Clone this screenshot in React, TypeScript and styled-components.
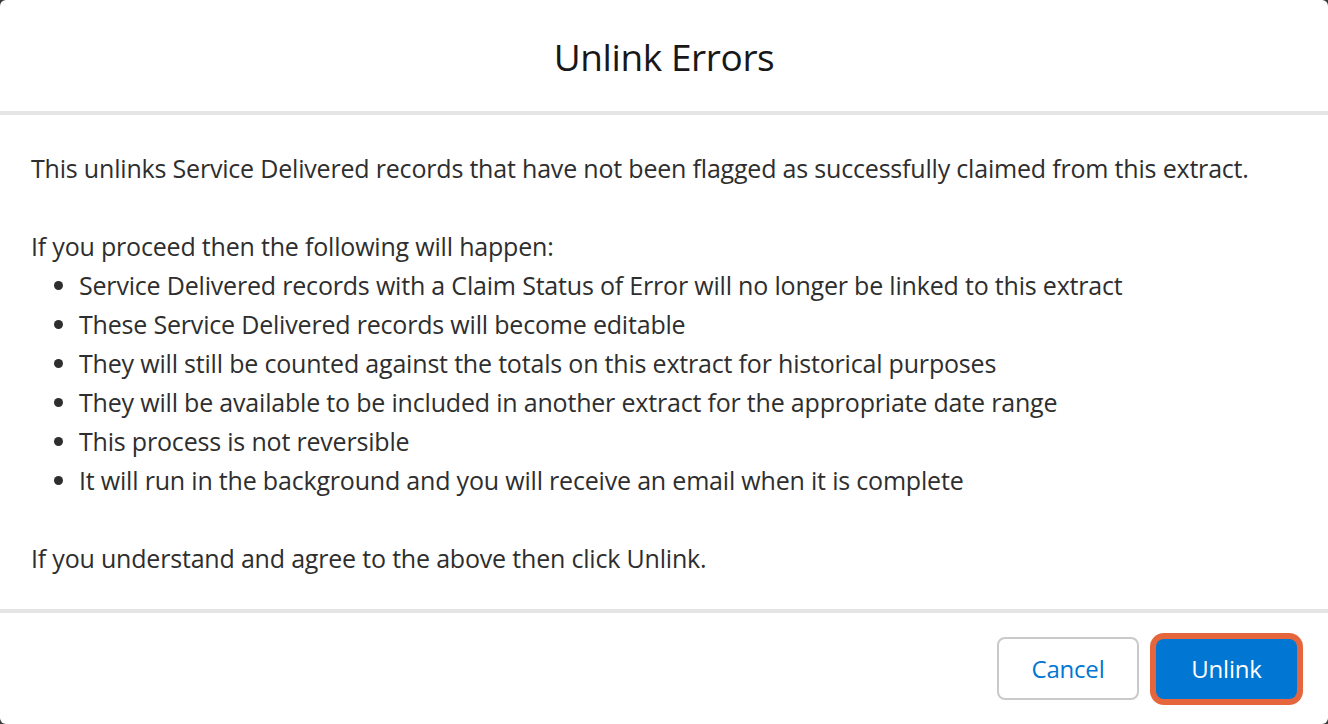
import React from "react";
import styled, { createGlobalStyle } from "styled-components";

const Global = createGlobalStyle`
  html, body { margin: 0; padding: 0; background: #3a3a3a; }
  body { font-family: "Open Sans", "Noto Sans", sans-serif; }
  * { box-sizing: border-box; }
`;

const Modal = styled.div`
  width: 1328px;
  height: 724px;
  background: #ffffff;
  border-radius: 6px;
  overflow: hidden;
  display: flex;
  flex-direction: column;
`;

const Header = styled.header`
  height: 115px;
  flex: none;
  display: flex;
  align-items: center;
  justify-content: center;
  border-bottom: 4px solid #e5e5e5;
  padding-top: 2px;
`;

const Title = styled.h1`
  margin: 0;
  font-family: "Open Sans", sans-serif;
  font-weight: 400;
  font-size: 37px;
  color: #181818;
  letter-spacing: -0.4px;
`;

const Body = styled.div`
  flex: 1;
  padding: 34px 31px 0;
  font-size: 25px;
  line-height: 39px;
  color: #2e2e2e;
  letter-spacing: -0.19px;
`;

const Para = styled.p`
  margin: 0 0 39px;
`;

const Lead = styled.p`
  margin: 0;
`;

const List = styled.ul`
  margin: 0 0 39px;
  padding-left: 48px;
  list-style: disc;
`;

const Item = styled.li`
  padding-left: 0;
`;

const Footer = styled.footer`
  height: 115px;
  flex: none;
  border-top: 4px solid #e5e5e5;
  display: flex;
  align-items: center;
  justify-content: flex-end;
  gap: 17px;
  padding: 0 31px 0 0;
`;

const Button = styled.button<{ $primary?: boolean }>`
  font-family: "Open Sans", sans-serif;
  font-size: 24px;
  letter-spacing: -0.2px;
  height: ${(p) => (p.$primary ? "60px" : "63px")};
  width: ${(p) => (p.$primary ? "141px" : "142px")};
  border-radius: 8px;
  cursor: pointer;
  border: ${(p) => (p.$primary ? "none" : "2px solid #c9c9c9")};
  background: ${(p) => (p.$primary ? "#0176d3" : "#ffffff")};
  color: ${(p) => (p.$primary ? "#ffffff" : "#0176d3")};
  box-shadow: ${(p) => (p.$primary ? "0 0 0 6px #e5663d" : "none")};
  padding: 0;
`;

const items = [
  "Service Delivered records with a Claim Status of Error will no longer be linked to this extract",
  "These Service Delivered records will become editable",
  "They will still be counted against the totals on this extract for historical purposes",
  "They will be available to be included in another extract for the appropriate date range",
  "This process is not reversible",
  "It will run in the background and you will receive an email when it is complete",
];

export default function App() {
  return (
    <>
      <Global />
      <Modal>
        <Header>
          <Title>Unlink Errors</Title>
        </Header>
        <Body>
          <Para>
            This unlinks Service Delivered records that have not been flagged as successfully claimed from this extract.
          </Para>
          <Lead>If you proceed then the following will happen:</Lead>
          <List>
            {items.map((t) => (
              <Item key={t}>{t}</Item>
            ))}
          </List>
          <Lead>If you understand and agree to the above then click Unlink.</Lead>
        </Body>
        <Footer>
          <Button>Cancel</Button>
          <Button $primary>Unlink</Button>
        </Footer>
      </Modal>
    </>
  );
}
